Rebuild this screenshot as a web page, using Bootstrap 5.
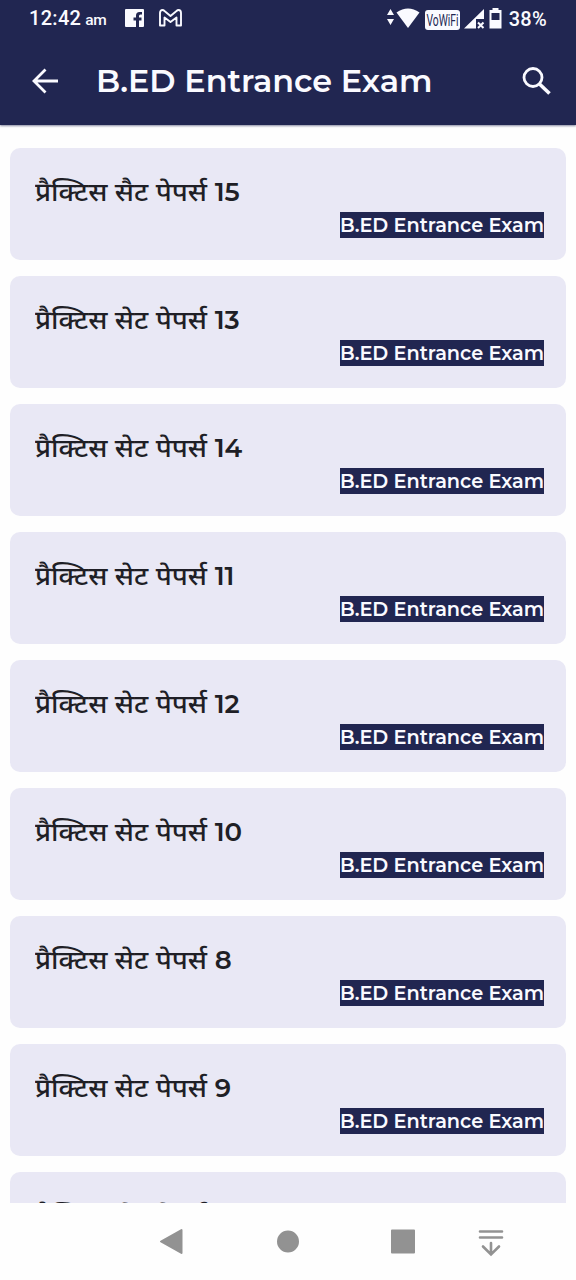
<!DOCTYPE html>
<html lang="hi">
<head>
<meta charset="utf-8">
<meta name="viewport" content="width=device-width, initial-scale=1">
<title>B.ED Entrance Exam</title>
<link href="https://cdn.jsdelivr.net/npm/bootstrap@5.3.0/dist/css/bootstrap.min.css" rel="stylesheet">
<style>
:root{--navy:#212651;--lilac:#e9e8f5}
body{height:1280px;overflow:hidden;background:#fefefe;font-family:Montserrat,Inter,"Noto Sans Devanagari","Noto Sans",sans-serif}
svg{display:block;flex:none}
.top-area{height:125px;background:var(--navy);color:#fafaff;box-shadow:0 1px 2px rgba(33,38,81,.55);z-index:1}
.status-row{height:38px;padding:0 29px 0 29px;font:500 20px/38px Roboto,sans-serif}
.clock{width:96px;white-space:nowrap;letter-spacing:.3px;gap:4px}
.clock-suffix{font-size:15.500px;letter-spacing:-.3px}
.charge{letter-spacing:.3px}
.gmail{margin-left:13px}
.signals{margin:-2px 3px 0 0}
.app-row{height:87px;padding:0 24px 0 31px}
.app-title{font-size:31.800px;font-weight:600;line-height:40px;margin:0 0 1px 37px;white-space:nowrap}
.exam-list{height:1078px;padding:23px 10px 0;gap:16px}
.exam-card{height:112px;flex:none;border-radius:10px;background:var(--lilac);padding:24px 22px 22px 25px;color:#1f1f26}
.exam-name{font-size:26px;line-height:40px;height:40px;white-space:nowrap}
.exam-name span{display:inline-block;font-weight:500;transform:scaleX(1.063);transform-origin:left;margin-right:11px}
.exam-name b{font-weight:600}
.exam-tag{height:26px;width:204px;background:var(--navy);color:#fafaff;font-size:19.300px;font-weight:600;line-height:27px;white-space:nowrap}
.system-nav{height:77px;background:#fefefe}
</style>
</head>
<body class="d-flex flex-column">
<header class="top-area flex-shrink-0 position-relative">
 <div class="status-row d-flex align-items-center">
  <div class="clock d-flex align-items-baseline"><span>12:42</span><span class="clock-suffix">am</span></div>
  <svg width="20" height="20" viewBox="0 0 20 20"><path fill="#fafaff" d="M0 1Q0 0 1 0H18Q19 0 19 1V17Q19 18 18 18H14V11.500H16.500V8.500H14V7Q14 5.500 15.500 5.500H17V3H14.500Q11 3 11 6.500V8.500H8.500V11.500H11V18H1Q0 18 0 17Z"/></svg>
  <svg class="gmail" width="25" height="20" viewBox="0 0 25 20"><path fill="none" stroke="#fafaff" stroke-width="1.900" stroke-linejoin="round" d="M2 4Q2 1 4.500 1Q5.500 1 6.500 2L12.500 7L18.500 2Q19.500 1 20.500 1Q23 1 23 4V16.500H18.500V8.500L12.500 13L6.500 8.500V16.500H2Z"/></svg>
  <svg class="signals ms-auto" width="119" height="24" viewBox="0 0 119 24"><g fill="#fafaff"><path d="M3.500 3L7 9H0ZM3.500 19L0 13H7Z"/><path d="M9.500 6.500Q21 -1.500 32.500 6.500L21 22Z"/><rect x="38" y="4" width="35" height="20" rx="3"/><path d="M97 3V13H89V22.500H77Z"/><path d="M105.500 2H111.500V4H114.500V22.500H102.500V4H105.500Z"/></g><path stroke="#fafaff" stroke-width="2" d="M91 16.500l5.500 5.500M96.500 16.500l-5.500 5.500"/><path fill="#212651" d="M104.500 7H112.500V14H104.500Z"/><text x="39.500" y="20" textLength="32" lengthAdjust="spacingAndGlyphs" font-family="Roboto" font-size="16" font-weight="400" fill="#212651">VoWiFi</text></svg>
  <span class="charge">38%</span>
 </div>
 <div class="app-row d-flex align-items-center">
  <svg width="28" height="28" viewBox="0 0 28 28"><path fill="none" stroke="#fafaff" stroke-width="2.800" d="M27 13H3M14.500 1.500L3 13L14.500 24.500"/></svg>
  <h1 class="app-title">B.ED Entrance Exam</h1>
  <svg class="ms-auto" width="30" height="30" viewBox="0 0 30 30"><circle cx="11" cy="10.500" r="9" fill="none" stroke="#fafaff" stroke-width="2.800"/><path stroke="#fafaff" stroke-width="3.600" d="M17.500 17L27.500 26.500"/></svg>
 </div>
</header>
<main class="exam-list d-flex flex-column overflow-hidden flex-shrink-0"></main>
<nav class="system-nav"><svg width="576" height="77" viewBox="0 0 576 77"><g fill="#929292" stroke="#929292" stroke-width="2" stroke-linejoin="round"><path d="M161 38.500L181.500 27V50Z"/><circle cx="288" cy="38.500" r="10"/><rect x="392" y="27.500" width="22" height="22"/></g><path fill="none" stroke="#929292" stroke-width="2.600" stroke-linecap="round" d="M480 28.500H502M480 34.500H502M491 40V51M483 43.500L491 51.500L499 43.500"/></svg></nav>
<script>
const papers=[['सैट','15'],['सेट','13'],['सेट','14'],['सेट','11'],['सेट','12'],['सेट','10'],['सेट','8'],['सेट','9'],['सेट','7']];
document.querySelector('.exam-list').innerHTML=papers.map(([word,number])=>`<article class="exam-card d-flex flex-column"><div class="exam-name"><span>प्रैक्टिस ${word} पेपर्स</span> <b>${number}</b></div><div class="exam-tag align-self-end">B.ED Entrance Exam</div></article>`).join('');
</script>
<script src="https://cdn.jsdelivr.net/npm/bootstrap@5.3.0/dist/js/bootstrap.bundle.min.js"></script>
</body>
</html>
